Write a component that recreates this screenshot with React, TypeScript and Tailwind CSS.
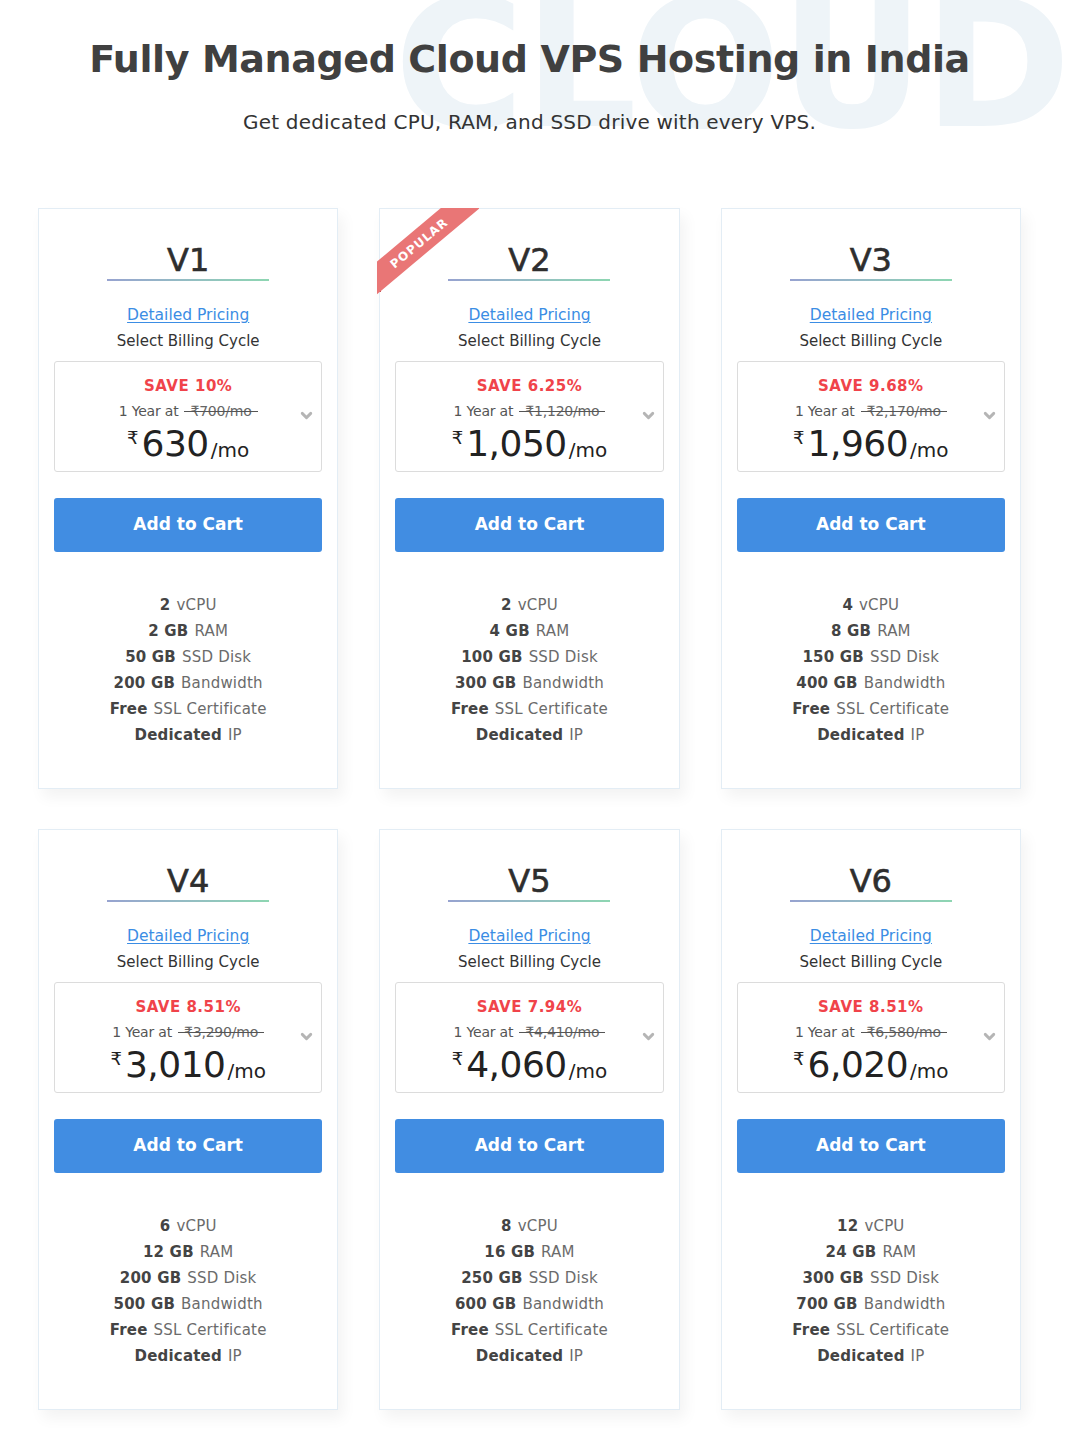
import { ChevronDown } from 'lucide-react'

type Plan = {
  name: string
  save: string
  was: string
  price: string
  cpu: string
  ram: string
  disk: string
  bw: string
  popular?: boolean
}

const plans: Plan[] = [
  { name: 'V1', save: '10%', was: '700', price: '630', cpu: '2', ram: '2 GB', disk: '50 GB', bw: '200 GB' },
  { name: 'V2', save: '6.25%', was: '1,120', price: '1,050', cpu: '2', ram: '4 GB', disk: '100 GB', bw: '300 GB', popular: true },
  { name: 'V3', save: '9.68%', was: '2,170', price: '1,960', cpu: '4', ram: '8 GB', disk: '150 GB', bw: '400 GB' },
  { name: 'V4', save: '8.51%', was: '3,290', price: '3,010', cpu: '6', ram: '12 GB', disk: '200 GB', bw: '500 GB' },
  { name: 'V5', save: '7.94%', was: '4,410', price: '4,060', cpu: '8', ram: '16 GB', disk: '250 GB', bw: '600 GB' },
  { name: 'V6', save: '8.51%', was: '6,580', price: '6,020', cpu: '12', ram: '24 GB', disk: '300 GB', bw: '700 GB' },
]

function Ribbon() {
  return (
    <div className="absolute -left-[3px] -top-[1px] w-[102px] h-[90px] overflow-hidden pointer-events-none">
      <div className="absolute left-0 bottom-[6px] w-[4px] h-[8px] bg-[#b94a4a]" />
      <div className="absolute left-[-39px] top-[23px] w-[160px] h-[25px] bg-[#e97676] -rotate-[40deg] flex items-center justify-center">
        <span className="text-white text-[12px] font-bold tracking-[1px] ml-[2px]">POPULAR</span>
      </div>
    </div>
  )
}

function Feature({ bold, rest }: { bold: string; rest: string }) {
  return (
    <li className="h-[26px] flex items-center justify-center gap-[6px] text-[15px] tracking-[0.2px]">
      <span className="font-bold text-[#444]">{bold}</span>
      <span className="text-[#6b6b6b]">{rest}</span>
    </li>
  )
}

function PlanCard({ plan }: { plan: Plan }) {
  return (
    <div className="relative bg-white border border-[#e3edf5] shadow-[5px_8px_14px_rgba(0,0,0,0.05)] px-[15px] pt-[33px] pb-[40px]">
      {plan.popular && <Ribbon />}
      <div className="flex flex-col items-center">
        <h3 className="text-[32px] leading-[36px] font-normal text-[#2e2e2e] [-webkit-text-stroke:0.6px_#2e2e2e]">{plan.name}</h3>
        <div className="mt-[1px] w-[162px] h-[2px] bg-gradient-to-r from-[#97a3d0] to-[#8ed6b2]" />
        <a href="#" className="mt-[24px] text-[15.5px] leading-[20px] text-[#3b8de4] underline underline-offset-2">
          Detailed Pricing
        </a>
        <p className="mt-[6px] text-[15px] leading-[20px] text-[#333]">Select Billing Cycle</p>
      </div>

      <div className="relative mt-[10px] h-[111px] border border-[#dcdcdc] rounded-[3px] flex flex-col items-center pt-[14px]">
        <div className="text-[15px] leading-[20px] font-semibold tracking-[0.5px] text-[#f0434a]">SAVE {plan.save}</div>
        <div className="mt-[6px] flex items-center text-[14px] leading-[18px] text-[#555] tracking-[-0.2px]">
          <span>1 Year at</span>
          <span className="relative ml-[6px] px-[6px] text-[#666]">
            ₹{plan.was}/mo
            <span className="absolute left-0 right-0 top-1/2 h-px bg-[#555]" />
          </span>
        </div>
        <div className="mt-[3px] flex items-start text-[#222]">
          <span className="text-[18px] leading-[22px] mt-[4px] mr-[3px]">₹</span>
          <span className="text-[36px] leading-[42px] tracking-[-0.5px]">{plan.price}</span>
          <span className="text-[20px] leading-[24px] mt-[15px] ml-[2px]">/mo</span>
        </div>
        <ChevronDown className="absolute right-[6px] top-[45px] w-[17px] h-[17px] text-[#b5b5b5]" strokeWidth={4} />
      </div>

      <button className="mt-[26px] w-full h-[54px] rounded-[3px] bg-[#418de2] text-white text-[17px] font-semibold">
        Add to Cart
      </button>

      <ul className="mt-[40px] flex flex-col">
        <Feature bold={plan.cpu} rest="vCPU" />
        <Feature bold={plan.ram} rest="RAM" />
        <Feature bold={plan.disk} rest="SSD Disk" />
        <Feature bold={plan.bw} rest="Bandwidth" />
        <Feature bold="Free" rest="SSL Certificate" />
        <Feature bold="Dedicated" rest="IP" />
      </ul>
    </div>
  )
}

export default function App() {
  return (
    <div className="relative min-h-[1454px] bg-white overflow-hidden font-['DejaVu_Sans',sans-serif]">
      <div className="absolute left-[394px] -top-[24px] text-[178px] leading-none font-bold text-[#eef4f8] select-none tracking-[-1px]">
        CLOUD
      </div>
      <div className="relative w-[1059px]">
        <header className="flex flex-col items-center pt-[34px]">
          <h1 className="text-[38px] leading-[50px] font-bold text-[#404040] tracking-[-0.4px]">
            Fully Managed Cloud VPS Hosting in India
          </h1>
          <p className="mt-[26px] text-[20px] leading-[24px] text-[#333] tracking-[0.2px]">
            Get dedicated CPU, RAM, and SSD drive with every VPS.
          </p>
        </header>
        <main className="grid grid-cols-3 gap-x-[41px] gap-y-[40px] px-[38px] mt-[74px]">
          {plans.map((p) => (
            <PlanCard key={p.name} plan={p} />
          ))}
        </main>
      </div>
    </div>
  )
}
